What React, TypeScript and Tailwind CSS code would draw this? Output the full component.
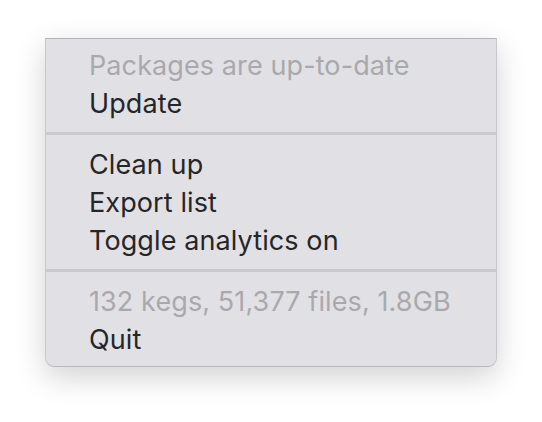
export default function App() {
  return (
    <div className="h-[422px] w-[542px] bg-white pt-[38px] pl-[45px]" style={{ fontFamily: "Inter, 'Noto Sans', sans-serif" }}>
      <div className="w-[452px] rounded-b-[9px] border border-t-[#b4b4b8] border-x-[#c8c8cc] border-b-[#b8b8bc] bg-[#e1e1e5] pt-[7px] pb-[8px] shadow-[0_10px_30px_rgba(0,0,0,0.18)]">
        <MenuText muted>Packages are up-to-date</MenuText>
        <MenuText>Update</MenuText>
        <Divider />
        <MenuText>Clean up</MenuText>
        <MenuText>Export list</MenuText>
        <MenuText>Toggle analytics on</MenuText>
        <Divider />
        <MenuText muted>132 kegs, 51,377 files, 1.8GB</MenuText>
        <MenuText>Quit</MenuText>
      </div>
    </div>
  );
}

function MenuText({ children, muted = false }: { children: string; muted?: boolean }) {
  return (
    <div className={`flex h-[38px] items-center pl-[43px] text-[27px] leading-none tracking-[0.1px] ${muted ? "text-[#a9a9ad]" : "text-[#262628]"}`}>
      {children}
    </div>
  );
}

function Divider() {
  return <div className="mt-[10px] mb-[10px] h-[3px] bg-[#cbcbcf]" />;
}
